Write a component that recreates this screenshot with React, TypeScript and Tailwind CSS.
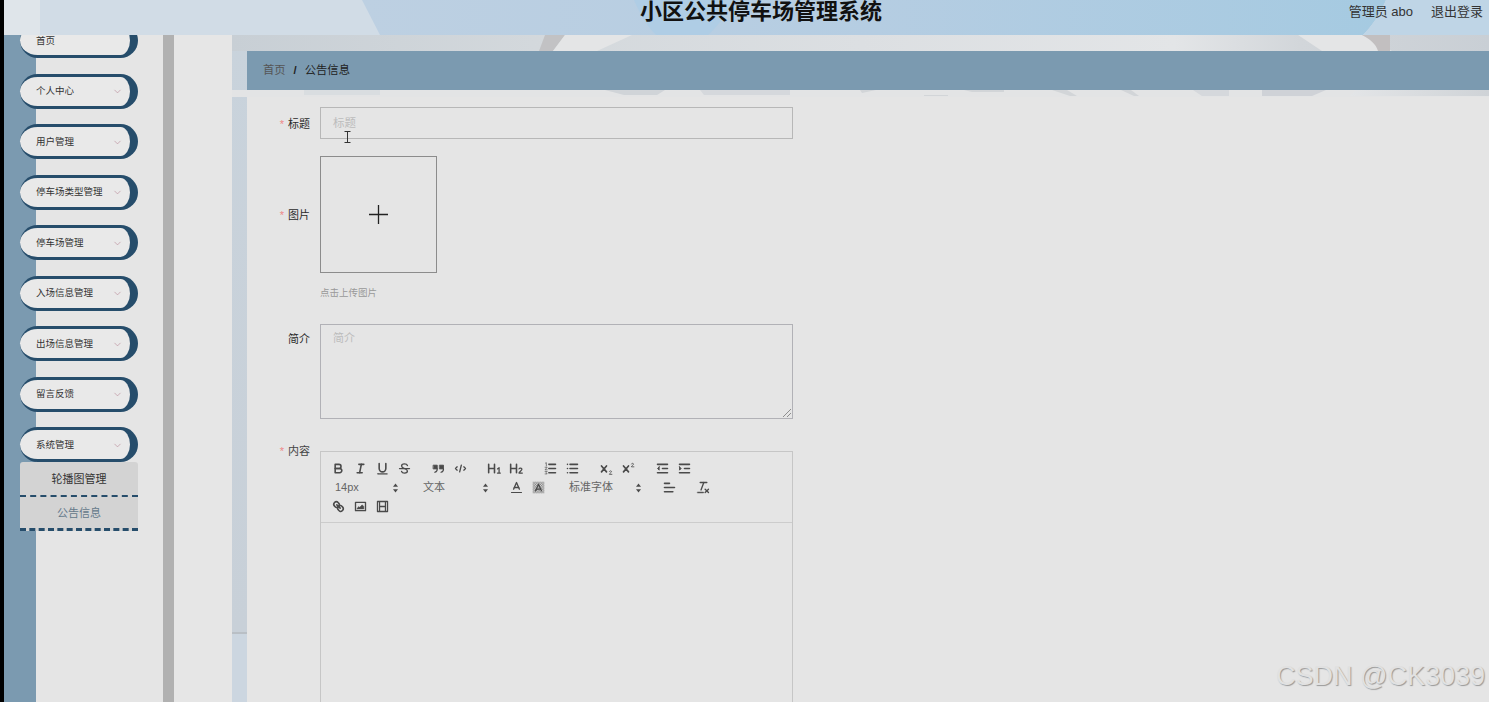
import type { ReactNode } from "react";
import { ChevronDown } from "lucide-react";

const menus = ["个人中心", "用户管理", "停车场类型管理", "停车场管理", "入场信息管理", "出场信息管理", "留言反馈", "系统管理"];

function MenuPill({ label, arrow = true }: { label: string; arrow?: boolean }) {
  return (
    <div className="h-[35px] shrink-0 flex items-center justify-between pl-4 pr-[7px] pt-[1px] rounded-[20px] bg-[#e9e9e9] border-t-[3px] border-b-[3px] border-r-[8px] border-[#264d6b]">
      <span className="text-[9.5px] text-[#333]">{label}</span>
      {arrow && <ChevronDown size={11} strokeWidth={1.4} className="text-[#b98c9a]" />}
    </div>
  );
}

function Ico({ children }: { children: ReactNode }) {
  return (
    <div className="w-[22px] h-[19px] flex items-center justify-center">
      <svg viewBox="0 0 18 18" width="15" height="15" fill="none" stroke="#4a4a4a" strokeWidth="1.9" strokeLinecap="round" strokeLinejoin="round">
        {children}
      </svg>
    </div>
  );
}

function Picker({ label, w }: { label: string; w: string }) {
  return (
    <div className={`${w} h-[19px] mr-3 pl-2 pr-[4px] flex items-center justify-between text-[11px] text-[#666]`}>
      <span>{label}</span>
      <svg viewBox="0 0 8 12" width="7" height="10" fill="#4a4a4a">
        <path d="M4 0.5 7 4.5H1Z" />
        <path d="M4 11.5 1 7.5H7Z" />
      </svg>
    </div>
  );
}

function Toolbar() {
  return (
    <div className="h-[71px] px-[6px] pt-[7px] border-b border-[#ccc] flex flex-col">
      <div className="flex h-[19px]">
        <div className="flex mr-3">
          <Ico>
            <path d="M5,4H9.5A2.5,2.5,0,0,1,12,6.5v0A2.5,2.5,0,0,1,9.5,9H5V4Z" />
            <path d="M5,9h5.5A2.5,2.5,0,0,1,13,11.5v0A2.5,2.5,0,0,1,10.5,14H5V9Z" />
          </Ico>
          <Ico>
            <line x1="7" x2="13" y1="4" y2="4" />
            <line x1="5" x2="11" y1="14" y2="14" />
            <line x1="8" x2="10" y1="14" y2="4" />
          </Ico>
          <Ico>
            <path d="M5,3V9a4,4,0,0,0,8,0V3" />
            <rect x="3" y="15" width="12" height="1" rx="0.5" fill="#4a4a4a" strokeWidth="0.5" />
          </Ico>
          <Ico>
            <line x1="3" x2="15" y1="9" y2="9" strokeWidth="1.5" />
            <path d="M12.5,5.5C12,4 10.5,3.5 9,3.5 7,3.5 5.5,4.5 5.5,6S7,8.2 9,9 12.5,10.5 12.5,12 11,14.5 9,14.5 6,14 5.5,12.5" strokeWidth="1.6" />
          </Ico>
        </div>
        <div className="flex mr-3">
          <Ico>
            <rect x="3" y="5" width="4.5" height="4.5" fill="#4a4a4a" strokeWidth="1" />
            <rect x="10.5" y="5" width="4.5" height="4.5" fill="#4a4a4a" strokeWidth="1" />
            <path d="M7.5,9.5c0,2-1,3.5-3,4" strokeWidth="1.4" />
            <path d="M15,9.5c0,2-1,3.5-3,4" strokeWidth="1.4" />
          </Ico>
          <Ico>
            <polyline points="5 7 3 9 5 11" strokeWidth="1.6" />
            <polyline points="13 7 15 9 13 11" strokeWidth="1.6" />
            <line x1="10" x2="8" y1="5" y2="13" strokeWidth="1.6" />
          </Ico>
        </div>
        <div className="flex mr-3">
          <Ico>
            <path d="M2,4V14M9,4V14M2,9H9" />
            <path d="M12.5,9.5 14.5,8V14.5M12.5,14.5H16" strokeWidth="1.5" />
          </Ico>
          <Ico>
            <path d="M2,4V14M9,4V14M2,9H9" />
            <path d="M12,9.5c0.5-1.5 3.5-1.5 3.5,0.4 0,1.6-3.5,3-3.5,4.6H16" strokeWidth="1.5" />
          </Ico>
        </div>
        <div className="flex mr-3">
          <Ico>
            <line x1="7" x2="15" y1="4" y2="4" />
            <line x1="7" x2="15" y1="9" y2="9" />
            <line x1="7" x2="15" y1="14" y2="14" />
            <path d="M3,2.5 4,2V6M2.5,7.5H5L2.5,10.5H5M2.5,12.5H5L3.7,14 5,15.5H2.5" strokeWidth="0.8" />
          </Ico>
          <Ico>
            <line x1="6" x2="15" y1="4" y2="4" />
            <line x1="6" x2="15" y1="9" y2="9" />
            <line x1="6" x2="15" y1="14" y2="14" />
            <line x1="3" x2="3" y1="4" y2="4" />
            <line x1="3" x2="3" y1="9" y2="9" />
            <line x1="3" x2="3" y1="14" y2="14" />
          </Ico>
        </div>
        <div className="flex mr-3">
          <Ico>
            <path d="M3,6 9,13M9,6 3,13" strokeWidth="2" />
            <path d="M12.5,12.5c0.3-1 2.5-1 2.5,0.3 0,1-2.5,2-2.5,3.2H15.5" strokeWidth="1" />
          </Ico>
          <Ico>
            <path d="M3,6 9,13M9,6 3,13" strokeWidth="2" />
            <path d="M12.5,3.5c0.3-1 2.5-1 2.5,0.3 0,1-2.5,2-2.5,3.2H15.5" strokeWidth="1" />
          </Ico>
        </div>
        <div className="flex">
          <Ico>
            <line x1="3" x2="15" y1="14" y2="14" />
            <line x1="3" x2="15" y1="4" y2="4" />
            <line x1="9" x2="15" y1="9" y2="9" />
            <polygon points="5 7 5 11 3 9 5 7" fill="#4a4a4a" strokeWidth="1" />
          </Ico>
          <Ico>
            <line x1="3" x2="15" y1="14" y2="14" />
            <line x1="3" x2="15" y1="4" y2="4" />
            <line x1="9" x2="15" y1="9" y2="9" />
            <polygon points="3 7 3 11 5 9 3 7" fill="#4a4a4a" strokeWidth="1" />
          </Ico>
        </div>
      </div>
      <div className="flex h-[19px]">
        <Picker label="14px" w="w-[76px]" />
        <Picker label="文本" w="w-[78px]" />
        <div className="flex mr-3">
          <Ico>
            <polyline points="5.5 11 9 3 12.5 11" strokeWidth="1.6" />
            <line x1="11.6" x2="6.4" y1="9" y2="9" strokeWidth="1.6" />
            <line x1="3" x2="15" y1="15" y2="15" strokeWidth="1.4" />
          </Ico>
          <Ico>
            <defs>
              <pattern id="dots" width="2" height="2" patternUnits="userSpaceOnUse">
                <rect width="1" height="1" fill="#777" stroke="none" />
                <rect x="1" y="1" width="1" height="1" fill="#777" stroke="none" />
              </pattern>
            </defs>
            <rect x="2" y="2" width="14" height="14" fill="url(#dots)" stroke="none" />
            <polyline points="5.5 13 9 5 12.5 13" strokeWidth="1.5" />
            <line x1="11.6" x2="6.4" y1="11" y2="11" strokeWidth="1.5" />
          </Ico>
        </div>
        <Picker label="标准字体" w="w-[85px]" />
        <div className="mr-3">
          <Ico>
            <line x1="3" x2="15" y1="9" y2="9" />
            <line x1="3" x2="13" y1="14" y2="14" />
            <line x1="3" x2="9" y1="4" y2="4" />
          </Ico>
        </div>
        <Ico>
          <line x1="5" x2="13" y1="3" y2="3" strokeWidth="1.6" />
          <line x1="6" x2="9.35" y1="12" y2="3" strokeWidth="1.6" />
          <line x1="11" x2="15" y1="11" y2="15" strokeWidth="1.6" />
          <line x1="15" x2="11" y1="11" y2="15" strokeWidth="1.6" />
          <rect x="2" y="14.5" width="7" height="1" fill="#4a4a4a" strokeWidth="0.6" />
        </Ico>
      </div>
      <div className="flex h-[19px]">
        <Ico>
          <line x1="7" x2="11" y1="7" y2="11" />
          <path d="M8.9,4.577a3.476,3.476,0,0,1,.36,4.679A3.476,3.476,0,0,1,4.577,8.9C3.185,7.5,2.035,6.4,4.217,4.217S7.5,3.185,8.9,4.577Z" />
          <path d="M13.423,9.1a3.476,3.476,0,0,0-4.679-.36,3.476,3.476,0,0,0,.36,4.679c1.392,1.392,2.5,2.542,4.679.36S14.815,10.5,13.423,9.1Z" />
        </Ico>
        <Ico>
          <rect x="3" y="4" width="12" height="10" strokeWidth="1.6" />
          <polyline points="5 12 5 11 7 9 8 10 11 7 13 9 13 12 5 12" fill="#4a4a4a" strokeWidth="0.5" />
        </Ico>
        <Ico>
          <rect x="3" y="3" width="12" height="12" strokeWidth="1.6" />
          <line x1="5.5" x2="5.5" y1="3" y2="15" strokeWidth="1.4" />
          <line x1="12.5" x2="12.5" y1="3" y2="15" strokeWidth="1.4" />
          <line x1="5.5" x2="12.5" y1="9" y2="9" strokeWidth="1.6" />
        </Ico>
      </div>
    </div>
  );
}

export default function App() {
  return (
    <div className="w-[1489px] h-[702px] overflow-hidden flex flex-col pl-1 bg-black font-['Liberation_Sans','Noto_Sans_CJK_SC',sans-serif]">
      {/* Header */}
      <header className="relative z-10 h-[35px] shrink-0 flex items-start overflow-hidden bg-[#d1dce6]">
        <svg className="absolute inset-0 w-full h-full" viewBox="0 0 1485 35" preserveAspectRatio="none">
          <defs>
            <linearGradient id="hdr" x1="0" x2="1" y1="0" y2="0">
              <stop offset="0" stopColor="#bdd0e2" />
              <stop offset="0.5" stopColor="#b5cde2" />
              <stop offset="1" stopColor="#a5cae1" />
            </linearGradient>
          </defs>
          <rect x="0" y="0" width="36" height="35" fill="#dfe5ea" />
          <path d="M358 0H1382C1376 14 1368 26 1359 35H376Z" fill="url(#hdr)" />
          <path d="M630 0C636 14 644 28 652 35H704C714 26 724 12 730 0Z" fill="#afcde5" />
          <path d="M1382 0H1485V35H1359C1368 26 1376 14 1382 0Z" fill="#bfd5e6" />
        </svg>
        <h1 className="relative ml-[636px] text-[22px] leading-[24px] font-bold text-[#111]">小区公共停车场管理系统</h1>
        <div className="relative ml-auto mr-[6px] mt-[3px] flex gap-[18px] text-[13px] leading-[18px] text-[#333]">
          <span>管理员 abo</span>
          <span>退出登录</span>
        </div>
      </header>

      <div className="flex-1 min-h-0 flex">
        {/* Sidebar */}
        <aside className="w-[159px] shrink-0 pl-4 pr-[25px] bg-[linear-gradient(90deg,#7b9ab0_32px,#e5e5e5_32px)]">
          <div className="-mt-[12px] flex flex-col gap-[15.5px]">
            <MenuPill label="首页" arrow={false} />
            {menus.map((m) => (
              <MenuPill key={m} label={m} />
            ))}
          </div>
          <div className="rounded-t-[3px] bg-[#d3d3d3] text-[11px] text-center">
            <div className="h-[34.5px] pt-[2px] flex items-center justify-center text-[#333] border-b-2 border-dashed border-[#264d6b]">轮播图管理</div>
            <div className="h-[34.5px] pt-[2px] flex items-center justify-center text-[#64798a] border-b-[3px] border-dashed border-[#264d6b]">公告信息</div>
          </div>
        </aside>
        <div className="w-[11px] shrink-0 bg-[#b1b1b1]" />
        <div className="w-[58px] shrink-0 bg-[#e6e6e6]" />

        {/* Main */}
        <main className="relative flex-1 min-w-0 flex flex-col pl-[15px] pt-4 bg-[linear-gradient(180deg,#c9d3dc_0,#c8d0d8_597px,#b9bfc5_597px,#b9bfc5_599px,#ccd6e0_599px)]">
          <svg className="absolute left-0 top-0 w-full h-[62px]" viewBox="0 0 1257 62" preserveAspectRatio="none">
            <defs>
              <linearGradient id="top" x1="0" x2="1" y1="0" y2="0">
                <stop offset="0" stopColor="#c8cfd5" />
                <stop offset="0.24" stopColor="#d3d8dc" />
                <stop offset="0.5" stopColor="#dcdfe2" />
                <stop offset="0.75" stopColor="#e3e5e7" />
                <stop offset="0.85" stopColor="#d2d6da" />
                <stop offset="1" stopColor="#c9cfd5" />
              </linearGradient>
              <linearGradient id="low" x1="0" x2="1" y1="0" y2="0">
                <stop offset="0" stopColor="#e3e5e7" />
                <stop offset="1" stopColor="#cfd3d7" />
              </linearGradient>
            </defs>
            <rect width="1257" height="16" fill="url(#top)" />
            <path d="M313 0H333L321 16H307Z" fill="#c2c2c4" />
            <path d="M333 0H400L365 16H321Z" fill="#e4e5e6" />
            <path d="M1066 0H1130L1160 16H1090Z" fill="#e4e5e6" />
            <path d="M1130 0H1158V16H1146C1144 9 1138 4 1130 0Z" fill="#c2bfc0" />
            <rect y="55" width="1257" height="7" fill="#e3e4e5" />
            <rect x="72" y="55" width="76" height="5" fill="#d9dde0" />
            <path d="M373 55H433L425 60H392Z" fill="#d0d4d8" />
            <path d="M468 55H558V60H472Z" fill="#d5d8dc" />
            <path d="M628 55H644L630 58Z" fill="#d2d5d8" />
            <path d="M692 60H716V61H692Z" fill="#d2d5d8" />
            <path d="M732 55H772V57H740Z" fill="#d2d5d8" />
            <path d="M820 55H835L845 61H838Z" fill="#d2d5d8" />
            <path d="M889 55H899L907 61H902Z" fill="#d2d5d8" />
            <path d="M961 55H997V61H970Z" fill="#d5d8dc" />
            <path d="M1030 55H1094L1080 61H1030Z" fill="#cfd2d7" />
            <path d="M1124 55H1257V61H1118Z" fill="url(#low)" />
          </svg>
          <div className="relative h-[39px] shrink-0 flex items-center pl-4 bg-[#7b9ab0] text-[11.3px]">
            <span className="text-[#555]">首页</span>
            <span className="mx-[8px] font-bold text-[#222]">/</span>
            <span className="text-[#222]">公告信息</span>
          </div>

          <div className="relative mt-[7px] flex-1 min-h-0 pt-[10px] overflow-hidden bg-[#e5e5e5] text-[11px]">
            <div className="flex items-center mb-[17px]">
              <label className="w-[63px] pt-[2px] text-right text-[#2a2a2a]"><span className="text-[#e88] mr-1">*</span>标题</label>
              <div className="relative ml-[10px] w-[473px] h-8 flex items-center pl-3 pt-[1px] border border-[#b7b7b7] text-[11.5px] text-[#bcbcbc]">
                标题
                <svg className="absolute left-[23px] top-[23px]" width="7" height="12" viewBox="0 0 7 12" fill="none" stroke="#333" strokeWidth="1">
                  <path d="M0.5 0.5H6.5M3.5 0.5V11.5M0.5 11.5H6.5" />
                </svg>
              </div>
            </div>

            <div className="flex items-center">
              <label className="w-[63px] pt-[2px] text-right text-[#2a2a2a]"><span className="text-[#e88] mr-1">*</span>图片</label>
              <div className="ml-[10px] w-[117px] h-[117px] flex items-center justify-center border border-[#8c8c8c]">
                <svg width="19" height="19" viewBox="0 0 19 19" stroke="#222" strokeWidth="1.3">
                  <path d="M9.5 0V19M0 9.5H19" />
                </svg>
              </div>
            </div>
            <p className="ml-[73px] mt-[13px] h-[14px] leading-[14px] text-[9.5px] text-[#999]">点击上传图片</p>

            <div className="flex items-start mt-[24px] mb-[32px]">
              <label className="w-[63px] h-8 leading-[30px] text-right text-[#2a2a2a]">简介</label>
              <div className="relative ml-[10px] w-[473px] h-[95px] pl-3 pt-[5px] border border-[#b1b1b6] text-[#bcbcbc]">
                简介
                <svg className="absolute right-[1px] bottom-[1px]" width="8" height="8" viewBox="0 0 8 8" stroke="#777" strokeWidth="0.8">
                  <path d="M0 8 8 0M4 8 8 4" />
                </svg>
              </div>
            </div>

            <div className="flex items-start">
              <label className="w-[63px] -mt-[8px] h-4 leading-4 text-right text-[#444]"><span className="text-[#e88] mr-1">*</span>内容</label>
              <div className="ml-[10px] w-[473px] h-[300px] border border-[#c6c6c6]">
                <Toolbar />
              </div>
            </div>

            <div className="absolute right-[4px] bottom-[10px] text-[27px] leading-8 text-[#e1e1e1] [text-shadow:1px_1px_1px_#999]">CSDN @CK3039</div>
          </div>
        </main>
      </div>
    </div>
  );
}
